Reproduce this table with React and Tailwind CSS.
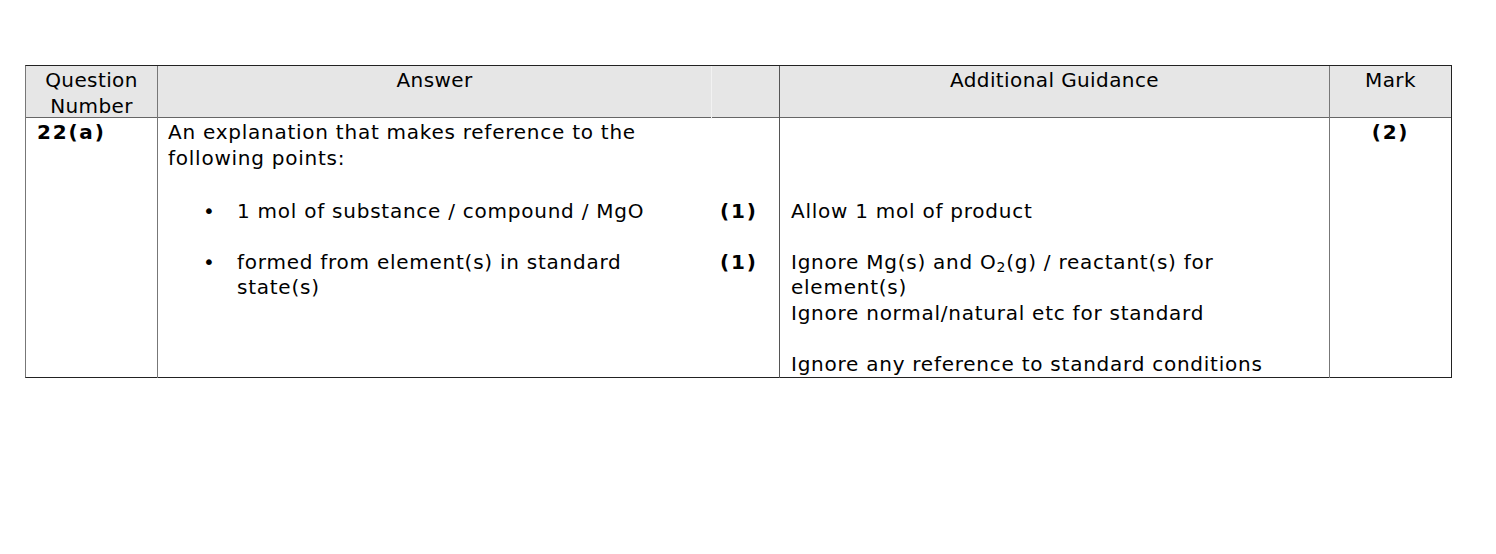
import React from 'react'

const FONT = "font-['DejaVu_Sans','Verdana',sans-serif]";

function Bullet({ children, mark, className = '' }) {
  return (
    <div className={`flex ${className}`}>
      <div className="flex w-[553px]">
        <span className="ml-[45px] w-[34px] shrink-0">•</span>
        <span>{children}</span>
      </div>
      <div className="pl-[9px] font-bold tracking-[1.8px]">{mark}</div>
    </div>
  );
}

export default function App() {
  return (
    <div className={`min-h-[554px] bg-white pl-[25px] pt-[65px] text-[20px] leading-[25.5px] tracking-[0.75px] text-black ${FONT}`}>
      <div className="w-[1427px] border border-[#222] border-l-[#777]">
        {/* header row */}
        <div className="grid h-[52px] grid-cols-[131px_554px_68px_550px_122px] border-b border-[#666] bg-[#e6e6e6] tracking-[0.4px]">
          <div className="pt-[2px] text-center">Question<br />Number</div>
          <div className="border-l border-[#777] pt-[2px] text-center">Answer</div>
          <div className="border-l border-[#f2f2f2]" />
          <div className="border-l border-[#555] pt-[2px] text-center">Additional Guidance</div>
          <div className="border-l border-[#777] pt-[2px] text-center">Mark</div>
        </div>

        {/* body row */}
        <div className="grid h-[259px] grid-cols-[131px_622px_550px_122px]">
          <div className="pl-[11px] pt-[2px] font-bold tracking-[1.8px]">22(a)</div>

          <div className="border-l border-[#777] pt-[2px]">
            <p className="pl-[10px]">
              An explanation that makes reference to the<br />following points:
            </p>
            <Bullet mark="(1)" className="mt-[28px]">1 mol of substance / compound / MgO</Bullet>
            <Bullet mark="(1)" className="mt-[25px]">formed from element(s) in standard<br />state(s)</Bullet>
          </div>

          <div className="border-l border-[#555] pl-[11px] pt-[81px]">
            <p>Allow 1 mol of product</p>
            <p className="mt-[25px]">
              Ignore Mg(s) and O<sub className="text-[14px]">2</sub>(g) / reactant(s) for<br />
              element(s)<br />
              Ignore normal/natural etc for standard
            </p>
            <p className="mt-[26px]">Ignore any reference to standard conditions</p>
          </div>

          <div className="border-l border-[#777] pt-[2px] text-center font-bold tracking-[1.8px]">(2)</div>
        </div>
      </div>
    </div>
  );
}
